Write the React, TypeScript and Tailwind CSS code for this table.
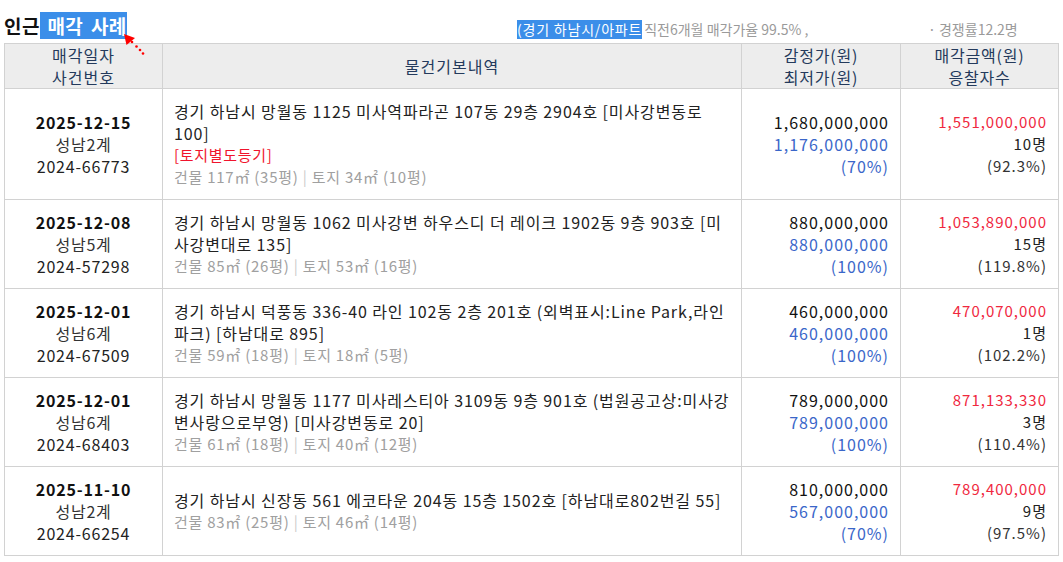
import React from "react";

type Row = {
  date: string;
  court: string;
  caseNo: string;
  lines: string[];
  tag?: string;
  bld: string;
  land: string;
  appraisal: string;
  minimum: string;
  minRate: string;
  sale: string;
  bidders: string;
  saleRate: string;
};

const rows: Row[] = [
  {
    date: "2025-12-15",
    court: "성남2계",
    caseNo: "2024-66773",
    lines: ["경기 하남시 망월동 1125 미사역파라곤 107동 29층 2904호 [미사강변동로", "100]"],
    tag: "[토지별도등기]",
    bld: "건물 117㎡ (35평)",
    land: "토지 34㎡ (10평)",
    appraisal: "1,680,000,000",
    minimum: "1,176,000,000",
    minRate: "(70%)",
    sale: "1,551,000,000",
    bidders: "10명",
    saleRate: "(92.3%)",
  },
  {
    date: "2025-12-08",
    court: "성남5계",
    caseNo: "2024-57298",
    lines: ["경기 하남시 망월동 1062 미사강변 하우스디 더 레이크 1902동 9층 903호 [미", "사강변대로 135]"],
    bld: "건물 85㎡ (26평)",
    land: "토지 53㎡ (16평)",
    appraisal: "880,000,000",
    minimum: "880,000,000",
    minRate: "(100%)",
    sale: "1,053,890,000",
    bidders: "15명",
    saleRate: "(119.8%)",
  },
  {
    date: "2025-12-01",
    court: "성남6계",
    caseNo: "2024-67509",
    lines: ["경기 하남시 덕풍동 336-40 라인 102동 2층 201호 (외벽표시:Line Park,라인", "파크) [하남대로 895]"],
    bld: "건물 59㎡ (18평)",
    land: "토지 18㎡ (5평)",
    appraisal: "460,000,000",
    minimum: "460,000,000",
    minRate: "(100%)",
    sale: "470,070,000",
    bidders: "1명",
    saleRate: "(102.2%)",
  },
  {
    date: "2025-12-01",
    court: "성남6계",
    caseNo: "2024-68403",
    lines: ["경기 하남시 망월동 1177 미사레스티아 3109동 9층 901호 (법원공고상:미사강", "변사랑으로부영) [미사강변동로 20]"],
    bld: "건물 61㎡ (18평)",
    land: "토지 40㎡ (12평)",
    appraisal: "789,000,000",
    minimum: "789,000,000",
    minRate: "(100%)",
    sale: "871,133,330",
    bidders: "3명",
    saleRate: "(110.4%)",
  },
  {
    date: "2025-11-10",
    court: "성남2계",
    caseNo: "2024-66254",
    lines: ["경기 하남시 신장동 561 에코타운 204동 15층 1502호 [하남대로802번길 55]"],
    bld: "건물 83㎡ (25평)",
    land: "토지 46㎡ (14평)",
    appraisal: "810,000,000",
    minimum: "567,000,000",
    minRate: "(70%)",
    sale: "789,400,000",
    bidders: "9명",
    saleRate: "(97.5%)",
  },
];

const cell = "border-r border-b border-[#d2d2d2]";

export default function App() {
  return (
    <div
      className="relative w-[1063px] h-[562px] bg-white px-[4px] text-[#222]"
      style={{ fontFamily: '"Noto Sans CJK KR", "Noto Sans", sans-serif' }}
    >
      {/* top bar */}
      <div className="flex items-end h-[43px]">
        <div className="mb-[6px] text-[19px] leading-[23px] font-bold text-[#111] whitespace-nowrap w-[513px] tracking-[0.4px]">
          인근<span className="bg-[#3b8ee9] text-white [word-spacing:3px]"> 매각 사례</span>
        </div>
        <div className="mb-[4px] flex w-[411px] text-[14px] leading-[19px] whitespace-nowrap">
          <span className="bg-[#3b8ee9] text-white tracking-[0.8px]">(경기 하남시/아파트 </span>
          <span className="text-[#9a9a9a] pl-[2px]">직전6개월 매각가율 99.5% ,</span>
        </div>
        <div className="mb-[4px] text-[14px] leading-[19px] text-[#9a9a9a] whitespace-nowrap">
          · 경쟁률12.2명
        </div>
      </div>

      {/* arrow */}
      <svg className="absolute left-[118px] top-[28px]" width="34" height="32" viewBox="0 0 34 32">
        <polygon points="6,6 8.5,17 17,10" fill="#ff0000" />
        <circle cx="14" cy="14" r="1.3" fill="#ff0000" />
        <circle cx="18.5" cy="18.5" r="1.3" fill="#ff0000" />
        <circle cx="22" cy="22" r="1.3" fill="#ff0000" />
        <circle cx="25" cy="25.5" r="1.3" fill="#ff0000" />
      </svg>

      {/* table */}
      <div className="grid grid-cols-[158px_579px_159px_158px] w-[1055px] border-l border-t border-[#d2d2d2] text-[16px] leading-[22px]">
        <div className={`${cell} bg-[#ededed] text-center text-[#243a5c] tracking-[1px]`}>
          매각일자
          <br />
          사건번호
        </div>
        <div className={`${cell} bg-[#ededed] flex items-center justify-center text-[#243a5c] tracking-[1px]`}>
          물건기본내역
        </div>
        <div className={`${cell} bg-[#ededed] text-center text-[#243a5c] tracking-[0.8px]`}>
          감정가(원)
          <br />
          최저가(원)
        </div>
        <div className={`${cell} bg-[#ededed] text-center text-[#243a5c] tracking-[0.8px]`}>
          매각금액(원)
          <br />
          응찰자수
        </div>

        {rows.map((r, i) => (
          <React.Fragment key={i}>
            <div className={`${cell} flex flex-col items-center justify-center py-[11px] tracking-[0.8px]`}>
              <div className="font-semibold text-[#111]">{r.date}</div>
              <div className="text-[#333]">{r.court}</div>
              <div className="text-[#222]">{r.caseNo}</div>
            </div>
            <div className={`${cell} flex flex-col justify-center py-[11px] pl-[11px] whitespace-nowrap tracking-[0.9px]`}>
              {r.lines.map((l, j) => (
                <div key={j} className="text-[#222]">
                  {l}
                </div>
              ))}
              {r.tag && <div className="text-[15px] text-[#f0142d] tracking-[0.7px]">{r.tag}</div>}
              <div className="text-[15px] text-[#a0a0a0] tracking-[0.75px]">
                {r.bld} <span className="text-[#cccccc]">|</span> {r.land}
              </div>
            </div>
            <div className={`${cell} flex flex-col items-end justify-center py-[11px] pr-[11px] tracking-[1px]`}>
              <div className="text-[#111]">{r.appraisal}</div>
              <div className="text-[#3a66c9]">{r.minimum}</div>
              <div className="text-[#3a66c9]">{r.minRate}</div>
            </div>
            <div className={`${cell} flex flex-col items-end justify-center py-[11px] pr-[11px] text-[15px] tracking-[1px]`}>
              <div className="text-[#f0283e]">{r.sale}</div>
              <div className="text-[#222]">{r.bidders}</div>
              <div className="text-[#333]">{r.saleRate}</div>
            </div>
          </React.Fragment>
        ))}
      </div>
    </div>
  );
}
